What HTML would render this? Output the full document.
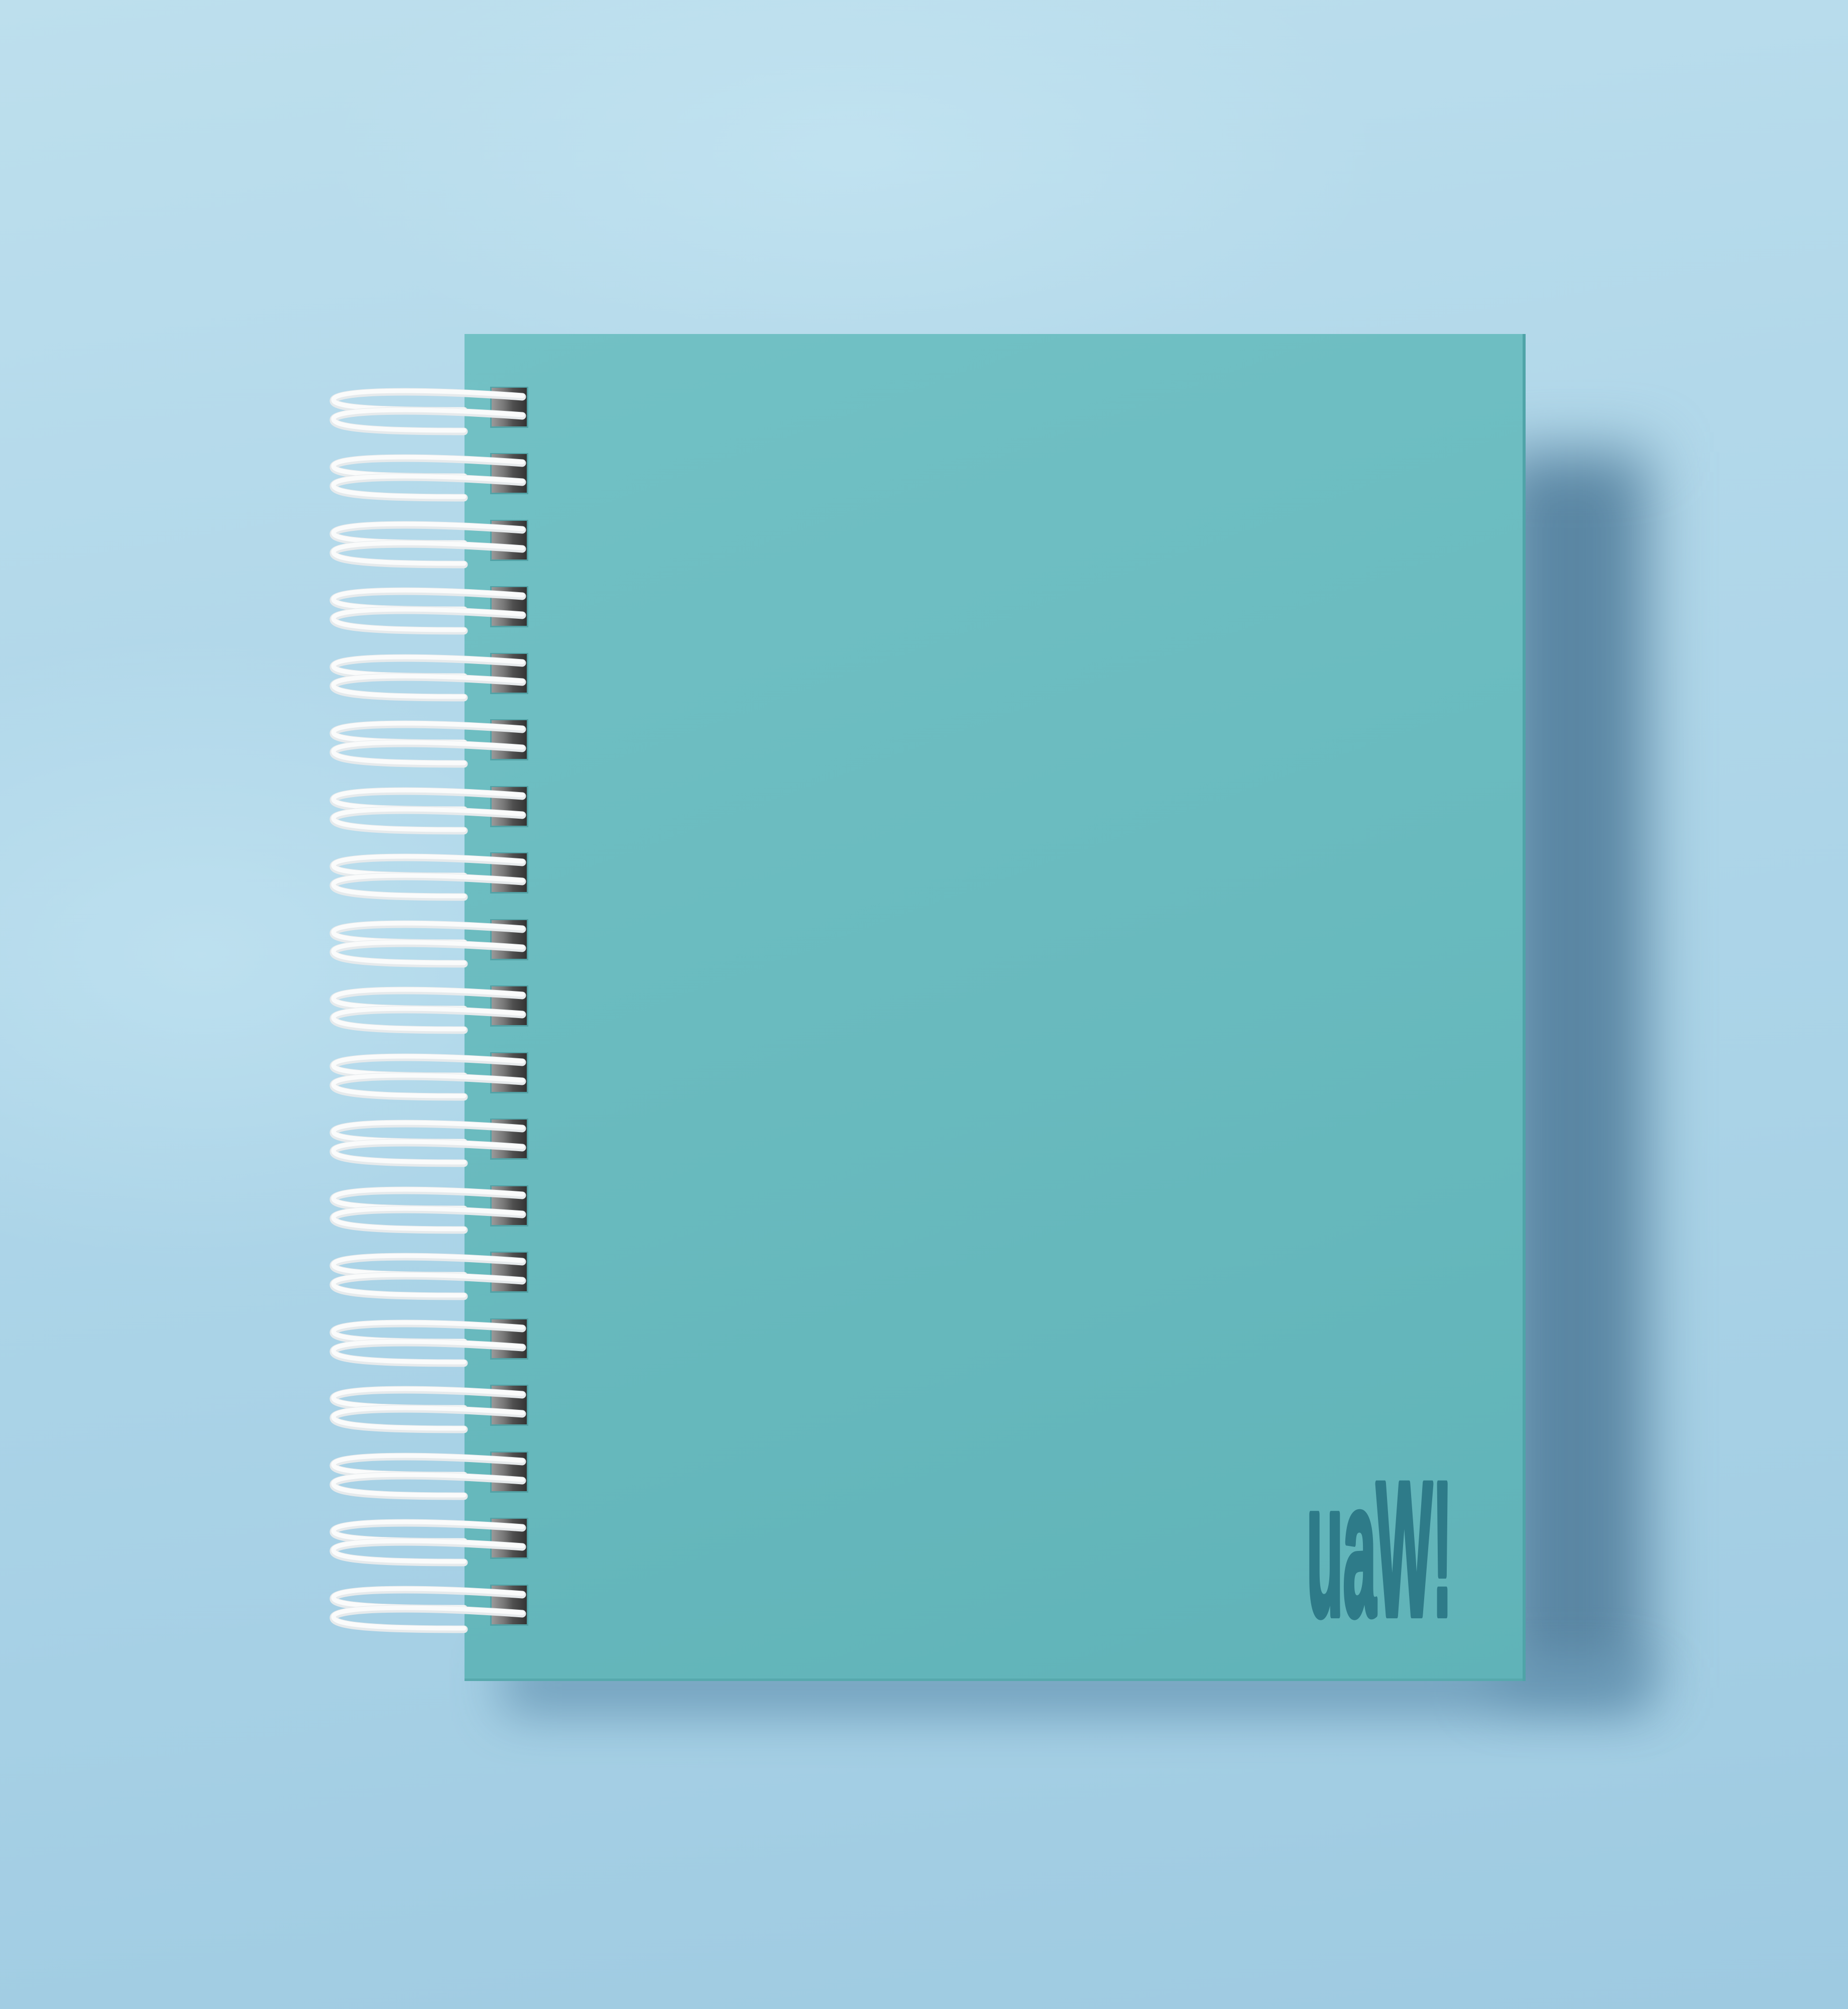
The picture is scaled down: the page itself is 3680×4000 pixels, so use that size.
<!DOCTYPE html>
<html><head><meta charset="utf-8"><style>
html,body{margin:0;padding:0;}
body{width:3680px;height:4000px;position:relative;overflow:hidden;
background:linear-gradient(170deg,#bddfed 0%,#b2d8ea 30%,#aad3e7 60%,#9ecae1 100%);}
.glow{position:absolute;left:0;top:0;width:3680px;height:4000px;
background:radial-gradient(ellipse 1400px 900px at 400px 1900px,rgba(200,232,244,0.55),rgba(200,232,244,0) 70%),
radial-gradient(ellipse 1500px 700px at 1700px 300px,rgba(200,232,244,0.5),rgba(200,232,244,0) 70%);}
.shadow{position:absolute;left:2980px;top:900px;width:300px;height:2460px;background:#5a86a3;filter:blur(60px);}
.shadow2{position:absolute;left:1000px;top:3300px;width:2280px;height:110px;background:#5f8fae;filter:blur(50px);opacity:.8;}
.cover{position:absolute;left:925px;top:665px;width:2113px;height:2682px;
background:linear-gradient(160deg,#72c1c5 0%,#6abbbf 45%,#60b3b8 100%);
box-shadow:inset -6px 0 0 #4fa4a8, inset 0 -5px 0 #57a9ad;}
svg{position:absolute;left:0;top:0;}
</style></head><body>
<div class="glow"></div>
<div class="shadow"></div>
<div class="shadow2"></div>
<div class="cover"></div>
<svg width="3680" height="4000" viewBox="0 0 3680 4000">
<defs>
<linearGradient id="hole" x1="0" x2="1" y1="0" y2="0">
<stop offset="0" stop-color="#9a9a9a"/><stop offset="0.35" stop-color="#777"/><stop offset="0.6" stop-color="#505050"/><stop offset="1" stop-color="#333"/>
</linearGradient>
<g id="ring">
<rect x="976" y="-2" width="76" height="82" fill="#52a2a6"/>
<rect x="979" y="0" width="70" height="77" fill="url(#hole)"/>
<path d="M1040,18 C820,2 664,6 664,26 C664,42 760,46 924,46" fill="none" stroke="#e6eaec" stroke-width="15" stroke-linecap="round"/>
<path d="M1040,16 C820,0 664,4 664,24 C664,40 760,44 924,44" fill="none" stroke="#fafbfb" stroke-width="9" stroke-linecap="round"/>
<path d="M1040,56 C820,40 664,44 664,64 C664,82 760,87 924,87" fill="none" stroke="#e6eaec" stroke-width="15" stroke-linecap="round"/>
<path d="M1040,54 C820,38 664,42 664,62 C664,80 760,85 924,85" fill="none" stroke="#fafbfb" stroke-width="9" stroke-linecap="round"/>
</g>
</defs>
<use href="#ring" transform="translate(0,772)"/>
<use href="#ring" transform="translate(0,904)"/>
<use href="#ring" transform="translate(0,1037)"/>
<use href="#ring" transform="translate(0,1169)"/>
<use href="#ring" transform="translate(0,1302)"/>
<use href="#ring" transform="translate(0,1434)"/>
<use href="#ring" transform="translate(0,1567)"/>
<use href="#ring" transform="translate(0,1699)"/>
<use href="#ring" transform="translate(0,1832)"/>
<use href="#ring" transform="translate(0,1964)"/>
<use href="#ring" transform="translate(0,2097)"/>
<use href="#ring" transform="translate(0,2229)"/>
<use href="#ring" transform="translate(0,2362)"/>
<use href="#ring" transform="translate(0,2494)"/>
<use href="#ring" transform="translate(0,2627)"/>
<use href="#ring" transform="translate(0,2759)"/>
<use href="#ring" transform="translate(0,2892)"/>
<use href="#ring" transform="translate(0,3024)"/>
<use href="#ring" transform="translate(0,3157)"/>
<text x="2602" y="3218" font-family="'Liberation Sans Narrow','Liberation Sans',sans-serif" font-weight="bold" font-size="290" fill="#2e7b89" stroke="#2e7b89" stroke-width="10" stroke-linejoin="round" textLength="290" lengthAdjust="spacingAndGlyphs" transform="translate(0,-1000) scale(1,1.31)">uaW!</text>
</svg>
</body></html>
